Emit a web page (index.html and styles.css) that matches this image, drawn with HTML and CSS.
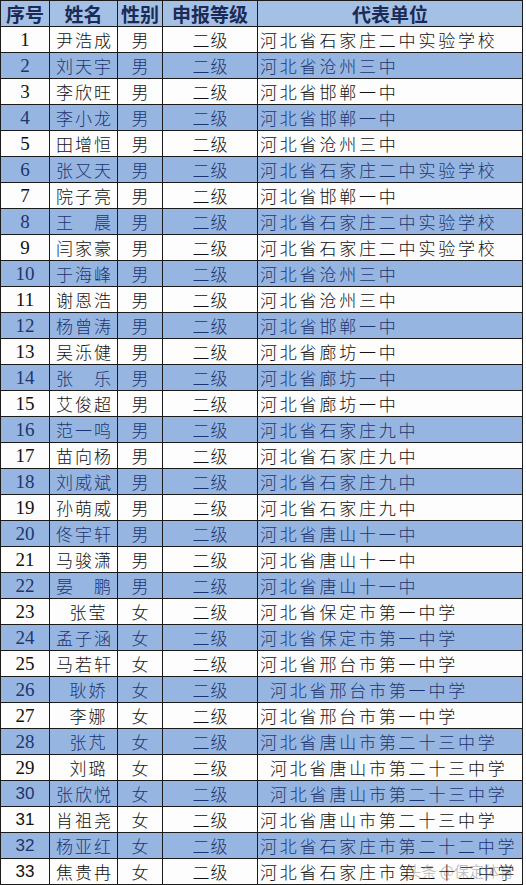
FILE: index.html
```html
<!DOCTYPE html>
<html lang="zh-CN">
<head>
<meta charset="utf-8">
<title>名单</title>
<link rel="stylesheet" href="styles.css">
</head>
<body>
<div class="page">
<table class="roster">
<colgroup>
<col class="c-no"><col class="c-name"><col class="c-sex"><col class="c-lvl"><col class="c-unit">
</colgroup>
<thead>
<tr><th>序号</th><th>姓名</th><th>性别</th><th>申报等级</th><th>代表单位</th></tr>
</thead>
<tbody>
<tr><td class="no">1</td><td class="name">尹浩成</td><td class="sex">男</td><td class="lvl">二级</td><td class="unit">河北省石家庄二中实验学校</td></tr>
<tr><td class="no">2</td><td class="name">刘天宇</td><td class="sex">男</td><td class="lvl">二级</td><td class="unit">河北省沧州三中</td></tr>
<tr><td class="no">3</td><td class="name">李欣旺</td><td class="sex">男</td><td class="lvl">二级</td><td class="unit">河北省邯郸一中</td></tr>
<tr><td class="no">4</td><td class="name">李小龙</td><td class="sex">男</td><td class="lvl">二级</td><td class="unit">河北省邯郸一中</td></tr>
<tr><td class="no">5</td><td class="name">田增恒</td><td class="sex">男</td><td class="lvl">二级</td><td class="unit">河北省沧州三中</td></tr>
<tr><td class="no">6</td><td class="name">张又天</td><td class="sex">男</td><td class="lvl">二级</td><td class="unit">河北省石家庄二中实验学校</td></tr>
<tr><td class="no">7</td><td class="name">院子亮</td><td class="sex">男</td><td class="lvl">二级</td><td class="unit">河北省邯郸一中</td></tr>
<tr><td class="no">8</td><td class="name">王　晨</td><td class="sex">男</td><td class="lvl">二级</td><td class="unit">河北省石家庄二中实验学校</td></tr>
<tr><td class="no">9</td><td class="name">闫家豪</td><td class="sex">男</td><td class="lvl">二级</td><td class="unit">河北省石家庄二中实验学校</td></tr>
<tr><td class="no">10</td><td class="name">于海峰</td><td class="sex">男</td><td class="lvl">二级</td><td class="unit">河北省沧州三中</td></tr>
<tr><td class="no">11</td><td class="name">谢恩浩</td><td class="sex">男</td><td class="lvl">二级</td><td class="unit">河北省沧州三中</td></tr>
<tr><td class="no">12</td><td class="name">杨曾涛</td><td class="sex">男</td><td class="lvl">二级</td><td class="unit">河北省邯郸一中</td></tr>
<tr><td class="no">13</td><td class="name">吴泺健</td><td class="sex">男</td><td class="lvl">二级</td><td class="unit">河北省廊坊一中</td></tr>
<tr><td class="no">14</td><td class="name">张　乐</td><td class="sex">男</td><td class="lvl">二级</td><td class="unit">河北省廊坊一中</td></tr>
<tr><td class="no">15</td><td class="name">艾俊超</td><td class="sex">男</td><td class="lvl">二级</td><td class="unit">河北省廊坊一中</td></tr>
<tr><td class="no">16</td><td class="name">范一鸣</td><td class="sex">男</td><td class="lvl">二级</td><td class="unit">河北省石家庄九中</td></tr>
<tr><td class="no">17</td><td class="name">苗向杨</td><td class="sex">男</td><td class="lvl">二级</td><td class="unit">河北省石家庄九中</td></tr>
<tr><td class="no">18</td><td class="name">刘威斌</td><td class="sex">男</td><td class="lvl">二级</td><td class="unit">河北省石家庄九中</td></tr>
<tr><td class="no">19</td><td class="name">孙萌威</td><td class="sex">男</td><td class="lvl">二级</td><td class="unit">河北省石家庄九中</td></tr>
<tr><td class="no">20</td><td class="name">佟宇轩</td><td class="sex">男</td><td class="lvl">二级</td><td class="unit">河北省唐山十一中</td></tr>
<tr><td class="no">21</td><td class="name">马骏潇</td><td class="sex">男</td><td class="lvl">二级</td><td class="unit">河北省唐山十一中</td></tr>
<tr><td class="no">22</td><td class="name">晏　鹏</td><td class="sex">男</td><td class="lvl">二级</td><td class="unit">河北省唐山十一中</td></tr>
<tr><td class="no">23</td><td class="name short">张莹</td><td class="sex">女</td><td class="lvl">二级</td><td class="unit">河北省保定市第一中学</td></tr>
<tr><td class="no">24</td><td class="name">孟子涵</td><td class="sex">女</td><td class="lvl">二级</td><td class="unit">河北省保定市第一中学</td></tr>
<tr><td class="no">25</td><td class="name">马若轩</td><td class="sex">女</td><td class="lvl">二级</td><td class="unit">河北省邢台市第一中学</td></tr>
<tr><td class="no">26</td><td class="name short">耿娇</td><td class="sex">女</td><td class="lvl">二级</td><td class="unit indent">河北省邢台市第一中学</td></tr>
<tr><td class="no">27</td><td class="name short">李娜</td><td class="sex">女</td><td class="lvl">二级</td><td class="unit">河北省邢台市第一中学</td></tr>
<tr><td class="no">28</td><td class="name short">张芃</td><td class="sex">女</td><td class="lvl">二级</td><td class="unit">河北省唐山市第二十三中学</td></tr>
<tr><td class="no">29</td><td class="name short">刘璐</td><td class="sex">女</td><td class="lvl">二级</td><td class="unit indent">河北省唐山市第二十三中学</td></tr>
<tr><td class="no sans">30</td><td class="name">张欣悦</td><td class="sex">女</td><td class="lvl">二级</td><td class="unit indent">河北省唐山市第二十三中学</td></tr>
<tr><td class="no sans">31</td><td class="name">肖祖尧</td><td class="sex">女</td><td class="lvl">二级</td><td class="unit">河北省唐山市第二十三中学</td></tr>
<tr><td class="no sans">32</td><td class="name">杨亚红</td><td class="sex">女</td><td class="lvl">二级</td><td class="unit">河北省石家庄市第二十二中学</td></tr>
<tr><td class="no sans">33</td><td class="name">焦贵冉</td><td class="sex">女</td><td class="lvl">二级</td><td class="unit">河北省石家庄市第二十二中学</td></tr>
</tbody>
</table>
<div class="watermark">头条 @保定体育</div>
</div>
</body>
</html>
```
FILE: styles.css
```css
html, body {
  margin: 0;
  padding: 0;
  background: #fdfdfd;
}
.page {
  position: relative;
  width: 526px;
  height: 885px;
  overflow: hidden;
}
.roster {
  border-collapse: collapse;
  table-layout: fixed;
  width: 522px;
  font-family: "Noto Sans CJK SC", "Liberation Sans", sans-serif;
  color: #111;
}
.c-no { width: 49px; }
.c-name { width: 68px; }
.c-sex { width: 45px; }
.c-lvl { width: 95px; }
.c-unit { width: 265px; }
.roster th, .roster td {
  border: 1px solid #1a1a1a;
  height: 25px;
  padding: 0;
  line-height: 24px;
  white-space: nowrap;
  overflow: hidden;
}
.roster thead th {
  background: #a5c0e5;
  color: #1b2b57;
  font-size: 19px;
  font-weight: bold;
  text-align: center;
}
.roster tbody tr:nth-child(even) td {
  background: #97b5e1;
  color: #1c3570;
}
.roster td {
  font-size: 17px;
  font-weight: 300;
}
.no {
  text-align: center;
  font-family: "Liberation Serif", serif;
  font-size: 19px !important;
  font-weight: normal !important;
}
.no.sans {
  font-family: "Liberation Sans", sans-serif;
  font-size: 17px !important;
}
.name {
  text-align: center;
  letter-spacing: 2px;
  text-indent: 2px;
}
.name.short {
  letter-spacing: 2px;
  text-indent: 10px;
}
.sex {
  text-align: center;
}
.lvl {
  text-align: center;
  letter-spacing: 1px;
  text-indent: 1px;
}
.unit {
  text-align: left;
  letter-spacing: 2.8px;
  padding-left: 2px !important;
}
.unit.indent {
  padding-left: 12px !important;
}
.watermark {
  position: absolute;
  right: 12px;
  bottom: 4px;
  font-family: "Noto Sans CJK SC", sans-serif;
  font-size: 15px;
  color: rgba(120, 120, 120, 0.45);
  letter-spacing: 0;
}
```
